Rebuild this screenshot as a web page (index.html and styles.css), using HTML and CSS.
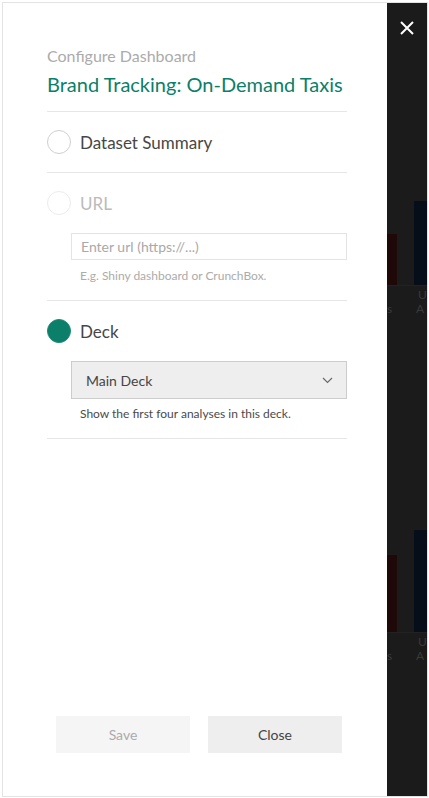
FILE: index.html
```html
<!DOCTYPE html>
<html>
<head>
<meta charset="utf-8">
<link rel="stylesheet" href="styles.css">
</head>
<body>
<div class="frame">
  <div class="panel">
    <div class="eyebrow">Configure Dashboard</div>
    <div class="title">Brand Tracking: On-Demand Taxis</div>
    <div class="options">
      <div class="row">
        <div class="row-head">
          <span class="radio"></span>
          <span class="label">Dataset Summary</span>
        </div>
      </div>
      <div class="row">
        <div class="row-head disabled">
          <span class="radio"></span>
          <span class="label">URL</span>
        </div>
        <div class="field">
          <div class="input">Enter url (https://...)</div>
          <div class="hint">E.g. Shiny dashboard or CrunchBox.</div>
        </div>
      </div>
      <div class="row">
        <div class="row-head">
          <span class="radio checked"></span>
          <span class="label">Deck</span>
        </div>
        <div class="field">
          <div class="select">
            <span>Main Deck</span>
            <svg class="chev" width="11" height="7" viewBox="0 0 11 7"><path d="M1 1 L5.5 5.5 L10 1" fill="none" stroke="#666" stroke-width="1.1"/></svg>
          </div>
          <div class="hint dark">Show the first four analyses in this deck.</div>
        </div>
      </div>
    </div>
    <div class="actions">
      <div class="btn save">Save</div>
      <div class="btn close">Close</div>
    </div>
  </div>
  <div class="overlay">
    <svg class="x" width="14" height="14" viewBox="0 0 14 14"><path d="M1 1 L13 13 M13 1 L1 13" stroke="#fff" stroke-width="2" fill="none"/></svg>
    <div class="chart c1">
      <div class="bars">
        <div class="bar red" style="height:51px"></div>
        <div class="bar navy" style="height:84px"></div>
      </div>
      <div class="labels">
        <span class="l u">U</span>
        <span class="l s">s</span>
        <span class="l a">A</span>
      </div>
    </div>
    <div class="chart c2">
      <div class="bars">
        <div class="bar red" style="height:77px"></div>
        <div class="bar navy" style="height:102px"></div>
      </div>
      <div class="labels">
        <span class="l u">U</span>
        <span class="l s">s</span>
        <span class="l a">A</span>
      </div>
    </div>
  </div>
</div>
</body>
</html>
```

FILE: styles.css
```css
* { box-sizing: border-box; }
html, body { margin: 0; padding: 0; background: #fff; }
body { font-family: Lato, "Open Sans", sans-serif; }

.frame {
  margin: 2px 1px 1px 2px;
  height: 795px;
  border: 1px solid #e3e3e3;
  display: flex;
}

.panel {
  width: 384px;
  padding: 43px 40px 43px 44px;
  display: flex;
  flex-direction: column;
  background: #fff;
}

.eyebrow {
  font-size: 16px;
  line-height: 20px;
  color: #ababab;
}
.title {
  margin-top: 6px;
  font-size: 20px;
  line-height: 24px;
  color: #0b7f69;
  padding-bottom: 15px;
  border-bottom: 1px solid #e6e6e6;
}

.row {
  padding: 18px 0 17px;
  border-bottom: 1px solid #e6e6e6;
}
.row:first-child { padding-bottom: 18px; }

.row-head {
  height: 24px;
  display: flex;
  align-items: center;
  gap: 9px;
}
.radio {
  width: 24px;
  height: 24px;
  border-radius: 50%;
  border: 1px solid #cfcfcf;
  background: #fff;
  flex: none;
}
.radio.checked {
  background: #0b7f69;
  border-color: #1d8a74;
}
.label {
  font-size: 17px;
  color: #474747;
}
.disabled .radio { border-color: #ececec; }
.disabled .label { color: #bbbbbb; }

.field { padding-left: 24px; }

.input {
  margin-top: 18px;
  height: 27px;
  border: 1px solid #e4e4e4;
  padding-left: 9px;
  font-size: 14px;
  line-height: 25px;
  color: #a9a9a9;
}
.hint {
  margin-top: 9px;
  padding-left: 9px;
  font-size: 12px;
  line-height: 14px;
  color: #ababab;
}
.hint.dark { margin-top: 8px; color: #4a4a4a; }

.select {
  margin-top: 18px;
  height: 38px;
  background: #eeeeee;
  border: 1px solid #cccccc;
  padding: 0 13px 0 14px;
  display: flex;
  align-items: center;
  justify-content: space-between;
  font-size: 14px;
  color: #454545;
}

.actions {
  margin-top: auto;
  padding-left: 9px;
  display: flex;
  gap: 18px;
}
.btn {
  width: 134px;
  height: 37px;
  display: flex;
  align-items: center;
  justify-content: center;
  font-size: 14px;
}
.btn.save { background: #f5f5f5; color: #ababab; }
.btn.close { background: #eeeeee; color: #444; }

.overlay {
  position: relative;
  flex: 1;
  background: #1b1b1b;
  overflow: hidden;
  display: flex;
  flex-direction: column;
}
.x { position: absolute; left: 13px; top: 18px; }

.chart { display: flex; flex-direction: column; }
.c1 { margin-top: 198px; }
.c2 { margin-top: 204px; }
.bars {
  display: flex;
  align-items: flex-end;
  gap: 17px;
  border-bottom: 1px solid #222;
}
.bar.red { width: 10px; background: #1f0808; }
.bar.navy { width: 13px; background: #060e19; }
.labels {
  position: relative;
  height: 40px;
  font-size: 12px;
  color: #3a3a3a;
}
.l { position: absolute; }
.l.u { left: 31px; top: 1px; }
.l.s { left: 0px; top: 15px; }
.l.a { left: 29px; top: 15px; }
```
